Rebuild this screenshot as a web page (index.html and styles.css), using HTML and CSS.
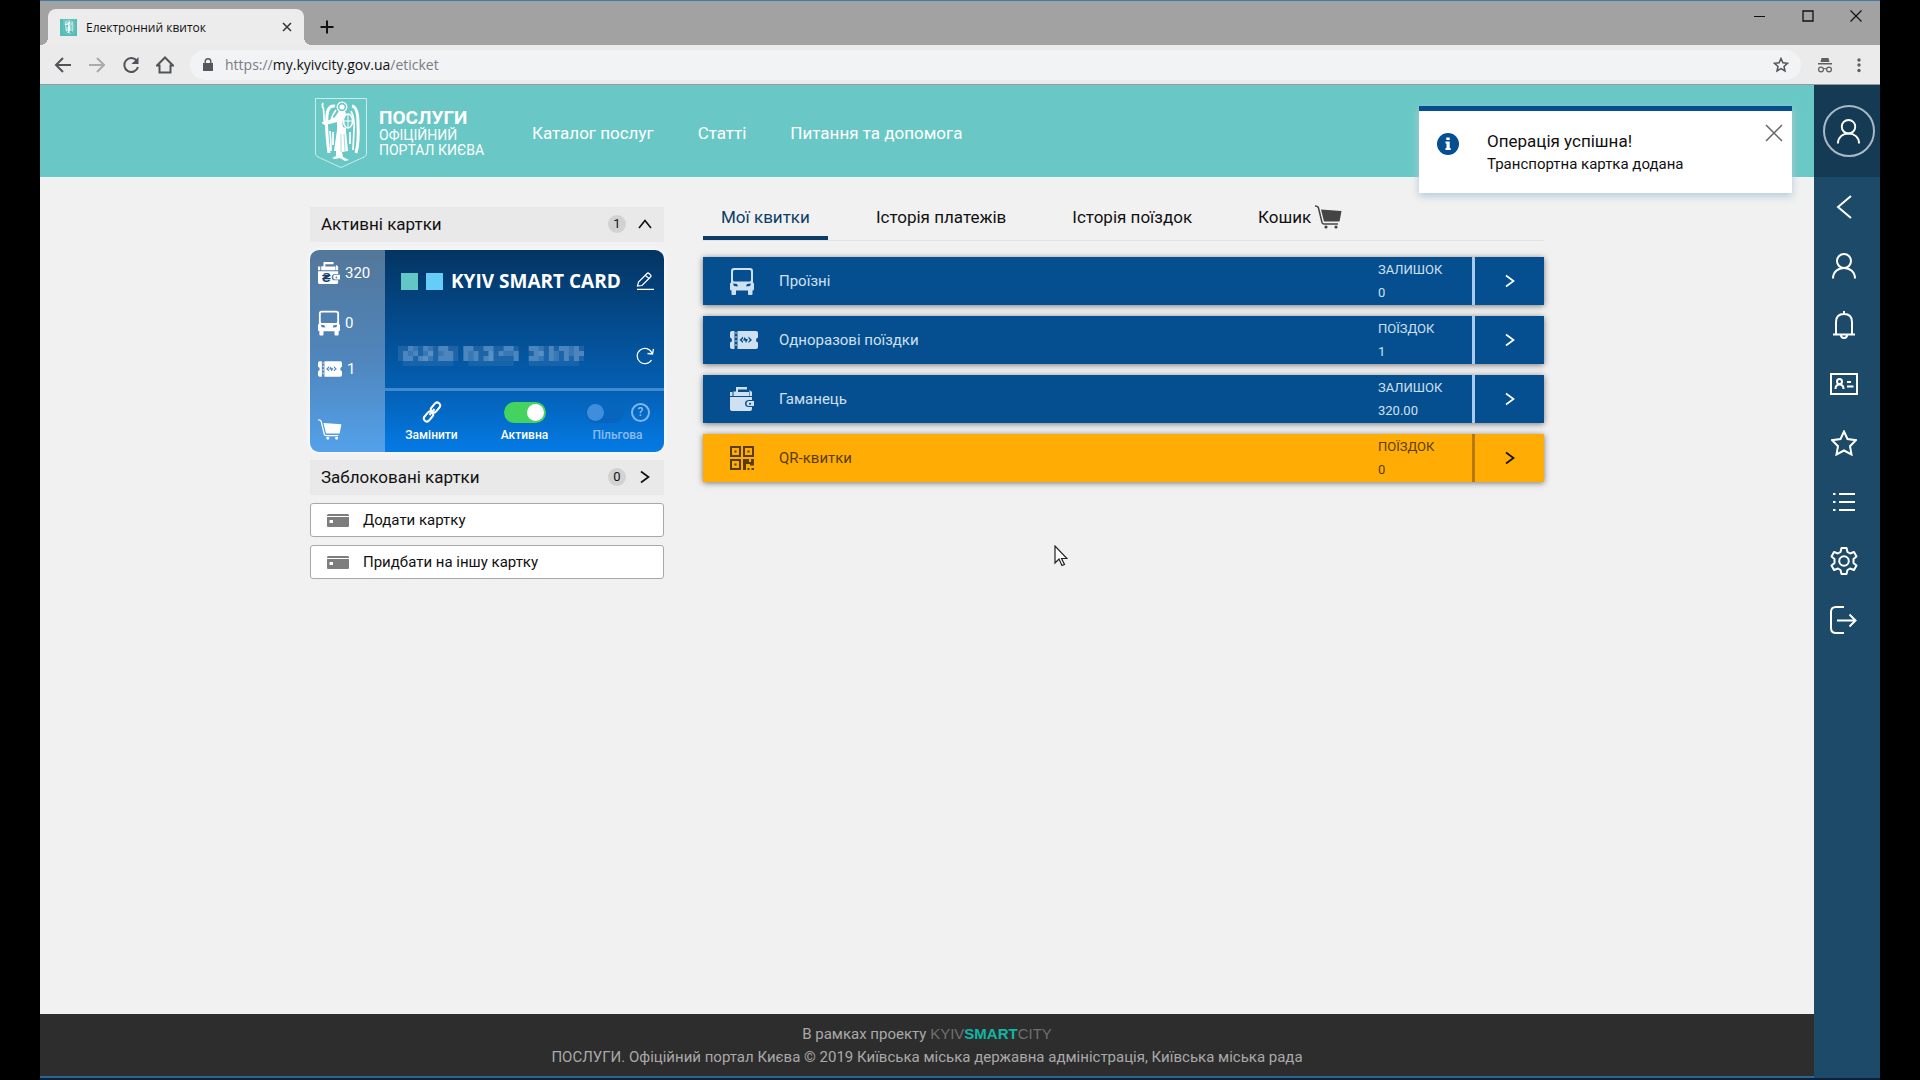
FILE: index.html
```html
<!DOCTYPE html>
<html lang="uk">
<head>
<meta charset="utf-8">
<meta name="viewport" content="width=device-width, initial-scale=1">
<title>Електронний квиток</title>
<link rel="stylesheet" href="styles.css">
</head>
<body>
<svg class="sprite" aria-hidden="true">
  <symbol id="bus" viewBox="0 0 24 27"><path fill-rule="evenodd" d="M4 0h16q3 0 3 3v11.500l1 1V21q0 1.500-1.500 1.500V26q0 1-1 1H19q-1 0-1-1v-3.500H6V26q0 1-1 1H2.500q-1 0-1-1v-3.500Q0 22.500 0 21v-5.500l1-1V3q0-3 3-3zM4.500 2Q3 2 3 3.500V12q0 1.500 1.500 1.500h15q1.500 0 1.500-1.500V3.500Q21 2 19.500 2zM3 15.500l1 2.500 4 .5-1-2.500zM21 15.500l-1 2.500-4 .5 1-2.500z"/></symbol>
  <symbol id="ticket" viewBox="0 0 28 18"><path fill-rule="evenodd" d="M2 0h2.500v18H2q-2 0-2-2v-4.500q2-.5 2-2.500T0 6.500V2q0-2 2-2zM5.500 1h1v2h-1zm0 4h1v2h-1zm0 4h1v2h-1zm0 4h1v2h-1zM7.500 0H26q2 0 2 2v4.500Q26 7 26 9t2 2.500V16q0 2-2 2H7.500zM13 5.500L9.500 9l3.500 3v-1.700L11.600 9 13 7.500zM14.500 6l-1.500 3.500h2l1 2.500 2-4h-2zM18.500 12L22 9l-3.500-3.500v1.700L20 9l-1.500 1.300z"/></symbol>
  <symbol id="wallet" viewBox="0 0 24 24"><path fill-rule="evenodd" d="M0 5h2.500v4H0zM3.500 9V4.500H6V0h11v2.500H8V9zm4.500-4h11v4H8zm11.500-2v6H22V5zM0 10h22v3h-3q-4 0-4 3.500t4 3.500h3v2q0 2-2 2H2q-2 0-2-2zM19 14h5v5h-5q-2.500 0-2.500-2.500T19 14zm1 1.700a1 1 0 1 0 .1 0z"/></symbol>
  <symbol id="cart" viewBox="0 0 27 24"><path d="M0 1q3 0 3.500 2L7 17.500Q7.500 19 9 19h14" fill="none" stroke="currentColor" stroke-width="1.500"/><path d="M6 4.500L26.500 6l-2 10.500H9z"/><circle cx="11" cy="22" r="1.600"/><circle cx="21" cy="22" r="1.600"/></symbol>
  <symbol id="qr" viewBox="0 0 24 24"><path fill-rule="evenodd" d="M0 0h11v11H0zM2 2v7h7V2zM4.500 4.500h2v2h-2zM13 0h11v11H13zM15 2v7h7V2zM17.500 4.500h2v2h-2zM0 13h11v11H0zM2 15v7h7v-7zM4.500 17.500h2v2h-2zM13 13h6v3h2v-3h3v6.500h-4V18h-4v6h-3zM17.500 22h2v2h-2zM21.500 22H24v2h-2.500z"/></symbol>
  <symbol id="right" viewBox="0 0 10 14"><path d="M1 1.500L8.500 7 1 12.500" fill="none" stroke="currentColor" stroke-width="1.700"/></symbol>
  <symbol id="person" viewBox="0 0 26 26"><g fill="none" stroke="currentColor" stroke-width="2"><circle cx="13" cy="8" r="7"/><path d="M2 25.500C2 19 7 15 13 15s11 4 11 10.500"/></g></symbol>
  <symbol id="bank-card" viewBox="0 0 22 13"><path fill-rule="evenodd" d="M1 0h20l1 1v1H0V1zM0 3h22v9q0 1-1 1H1q-1 0-1-1zM2.500 6v3H6V6z"/></symbol>
  <symbol id="angel" viewBox="0 0 52 70">
    <path d="M.5.500h51V56Q51 58 49 59L26 69.500 3 59Q1 58 .5 56z" fill="none" stroke="currentColor" stroke-opacity=".65"/>
    <g fill="none" stroke="currentColor">
      <circle cx="27" cy="9" r="4.800" stroke-width="1.300"/>
      <path d="M8 5q-1.500 3 .5 5.500L9.500 27M7 25l8-2" stroke-width="1.700"/>
      <path d="M20 8q-7-1-8 9t0 20q1 11 2 18M37 8q6 1 6 18 1 18-2 29" stroke-width="3"/>
      <path d="M21 12q-4 5-5 11m-1 10q1 10 1 20M36 13q4 8 3 19l-1 20M18 34v13M35 34v12" stroke-width="1.700"/>
      <ellipse cx="33" cy="23" rx="4.500" ry="7" stroke-width="1.500"/><path d="M33 17v12m-4-6h8"/>
    </g>
    <g fill="currentColor"><circle cx="27" cy="9" r="2.600"/><path d="M24 13h6l1 3q-5 6-3 13l3 1v3l2 20-6 1 1 5 6 3-4 1-5-3-5 1-3-1 4-2v-5h-2l3-21v-8q-6 2-13 3v-2l11-6z"/></g>
    <path d="M26 36v18m3-18l1 17" stroke="#69c8c5" stroke-width=".6"/>
  </symbol>
</svg>

<div class="window">
  <div class="tabstrip">
    <div class="browser-tab">
      <span class="favicon"><svg width="12" height="16"><use href="#angel"/></svg></span>
      <span class="browser-tab-title">Електронний квиток</span>
      <button class="bare" aria-label="Закрити вкладку"><svg width="10" height="10" viewBox="0 0 10 10"><path d="M1 1l8 8M9 1L1 9" stroke="#333" stroke-width="1.500"/></svg></button>
    </div>
    <button class="bare new-tab" aria-label="Нова вкладка"><svg width="14" height="14" viewBox="0 0 14 14"><path d="M7 .5v13M.5 7h13" stroke="#111" stroke-width="2"/></svg></button>
    <div class="window-controls">
      <button class="bare" aria-label="Згорнути"><svg width="12" height="12" viewBox="0 0 12 12"><path d="M0 6.500h11" stroke="#111"/></svg></button>
      <button class="bare" aria-label="Розгорнути"><svg width="12" height="12" viewBox="0 0 12 12"><path d="M1 1h10v10H1z" stroke="#111" fill="none" stroke-width="1.300"/></svg></button>
      <button class="bare" aria-label="Закрити"><svg width="12" height="12" viewBox="0 0 12 12"><path d="M.5.500l11 11m0-11l-11 11" stroke="#111" stroke-width="1.200"/></svg></button>
    </div>
  </div>
  <div class="toolbar">
    <div class="nav-buttons">
      <button class="bare" aria-label="Назад"><svg width="18" height="18" viewBox="0 0 18 18"><path d="M9 2L2 9l7 7M2 9h15" fill="none" stroke="#505458" stroke-width="2"/></svg></button>
      <button class="bare" aria-label="Вперед"><svg width="18" height="18" viewBox="0 0 18 18"><path d="M9 2l7 7-7 7M16 9H1" fill="none" stroke="#aaa" stroke-width="2"/></svg></button>
      <button class="bare" aria-label="Оновити"><svg width="18" height="18" viewBox="0 0 18 18"><path d="M15 5A7 7 0 1 0 16 11" fill="none" stroke="#505458" stroke-width="2"/><path d="M16.500 1v7h-7z" fill="#505458"/></svg></button>
      <button class="bare" aria-label="Додому"><svg width="18" height="18" viewBox="0 0 18 18"><path d="M1 9.500L9 1.500l8 8h-2.500V16.500h-11V9.500z" fill="none" stroke="#505458" stroke-width="2"/></svg></button>
    </div>
    <div class="address">
      <svg width="10" height="13" viewBox="0 0 10 13"><path d="M0 5h10v8H0z" fill="#55595e"/><path d="M2.200 5V3.500a2.800 2.800 0 0 1 5.600 0V5" fill="none" stroke="#55595e" stroke-width="1.400"/></svg>
      <span class="url">https://<b>my.kyivcity.gov.ua</b>/eticket</span>
      <button class="bare" aria-label="Додати закладку"><svg width="16" height="16" viewBox="0 0 16 16"><path d="M8 1.500l1.900 4.300 4.600.5-3.500 3.100 1 4.600-4-2.400L4 14l1-4.600L1.500 6.300l4.600-.5z" fill="none" stroke="#505458" stroke-width="1.500"/></svg></button>
    </div>
    <div class="toolbar-end">
      <svg width="16" height="16" viewBox="0 0 16 16"><path d="M4.500 1h7l1 4h-9zM1 6h14v1.500H1z" fill="#5c6064"/><g fill="none" stroke="#5c6064" stroke-width="1.200"><circle cx="4" cy="12.500" r="2.400"/><circle cx="12" cy="12.500" r="2.400"/><path d="M6.500 12q1.500-1 3 0"/></g></svg>
      <button class="bare" aria-label="Меню"><svg width="4" height="16" viewBox="0 0 4 16" fill="#5c6064"><circle cx="2" cy="3" r="1.700"/><circle cx="2" cy="8" r="1.700"/><circle cx="2" cy="13.500" r="1.700"/></svg></button>
    </div>
  </div>

  <div class="page">
    <div class="site">
      <header class="site-header">
        <div class="container header-row">
          <a class="logo" href="#">
            <svg width="52" height="70"><use href="#angel"/></svg>
            <span class="logo-text"><strong>ПОСЛУГИ</strong><span>ОФІЦІЙНИЙ</span><span>ПОРТАЛ КИЄВА</span></span>
          </a>
          <nav class="main-nav"><a href="#">Каталог послуг</a><a href="#">Статті</a><a href="#">Питання та допомога</a></nav>
        </div>
      </header>

      <main class="container content">
        <aside class="cards">
          <button class="group-head"><span>Активні картки</span><span class="count">1</span><svg width="14" height="14" viewBox="0 0 14 14"><path d="M1 11l6-7.500 6 7.500" fill="none" stroke="#111" stroke-width="1.600"/></svg></button>
          <section class="smart-card">
            <ul class="balances">
              <li class="balance"><span class="purse"><svg width="22" height="24"><use href="#wallet"/></svg><i>₴</i></span>320</li>
              <li class="balance"><svg width="22" height="26"><use href="#bus"/></svg>0</li>
              <li class="balance"><svg width="24" height="16"><use href="#ticket"/></svg>1</li>
              <li class="balance"><svg width="24" height="21"><use href="#cart"/></svg></li>
            </ul>
            <div class="card-main">
              <div class="card-title">
                <span class="swatch teal"></span><span class="swatch sky"></span>
                <h2>KYIV SMART CARD</h2>
                <button class="bare" aria-label="Редагувати"><svg width="18" height="18" viewBox="0 0 18 18" fill="none" stroke="#fff" stroke-width="1.200"><path d="M1 17.400h17M1.500 14l1-4L11 1.500q1-1 2 0L14.500 3q1 1 0 2L6 13.500zM9.500 3.500L13 6.500"/></svg></button>
              </div>
              <div class="card-number">
                <svg width="186" height="20" viewBox="0 0 37 4" preserveAspectRatio="none" role="img" aria-label="Номер картки приховано">
                  <g fill="#7ba7d2"><path opacity=".2" d="M0 0h12v3H0zM13 0h11v3H13zM26 0h11v3H26z"/><path opacity=".15" d="M1 3h10v1H1zM14 3h9v1H14zM26 3h10v1H26z"/><path opacity=".5" d="M2 0h1v1H2zM5 0h1v1H5zM8 0h2v1H8zM1 1h1v1H1zM3 1h1v1H3zM6 1h1v1H6zM9 1h2v1H9zM1 2h2v1H1zM4 2h2v1H4zM8 2h3v1H8zM13 0h2v1H13zM17 0h2v1H17zM21 0h2v1H21zM13 1h1v2H13zM15 1h1v2H15zM18 1h1v1H18zM20 1h1v1H20zM23 1h1v2H23zM17 2h2v1H17zM26 0h2v1H26zM30 0h1v1H30zM32 0h2v1H32zM35 0h1v1H35zM27 1h2v1H27zM30 1h1v1H30zM33 1h1v2H33zM35 1h2v1H35zM26 2h2v1H26zM30 2h1v1H30zM35 2h1v1H35z"/><path opacity=".3" d="M3 0h1v1H3zM6 0h1v3H6zM2 1h1v1H2zM5 1h1v2H5zM8 1h1v1H8zM14 1h1v2H14zM18 1h1v2H18zM21 1h2v1H21zM28 0h1v2H28zM28 2h1v1H28zM31 1h1v2H31zM34 0h1v2H34z"/></g>
                </svg>
                <button class="bare" aria-label="Оновити"><svg width="18" height="18" viewBox="0 0 18 18" fill="none" stroke="#fff" stroke-width="1.300"><path d="M15.500 13A7.700 7.700 0 1 1 16 6M11.500 6.500l5 .5L17.500 2"/></svg></button>
              </div>
            </div>
            <div class="card-actions">
              <button class="bare action"><span class="action-icon"><svg width="20" height="22" viewBox="0 0 20 22" fill="none" stroke="#fff" stroke-width="2"><rect x="10.500" y="1" width="6" height="11" rx="3" transform="rotate(40 13.500 6.500)"/><rect x="3.500" y="10" width="6" height="11" rx="3" transform="rotate(40 6.500 15.500)"/><path d="M7.500 14L12.500 8"/></svg></span>Замінити</button>
              <label class="action"><span class="action-icon"><input class="toggle" type="checkbox" checked></span>Активна</label>
              <label class="action muted"><span class="action-icon"><input class="toggle" type="checkbox" disabled><span class="help">?</span></span>Пільгова</label>
            </div>
          </section>
          <button class="group-head"><span>Заблоковані картки</span><span class="count">0</span><svg width="14" height="14"><use href="#right"/></svg></button>
          <button class="card-button"><svg width="22" height="13"><use href="#bank-card"/></svg>Додати картку</button>
          <button class="card-button"><svg width="22" height="13"><use href="#bank-card"/></svg>Придбати на іншу картку</button>
        </aside>

        <section class="tickets">
          <nav class="tabs">
            <a class="tab active" href="#">Мої квитки</a>
            <a class="tab" href="#">Історія платежів</a>
            <a class="tab" href="#">Історія поїздок</a>
            <a class="tab" href="#">Кошик<svg width="27" height="24"><use href="#cart"/></svg></a>
          </nav>
          <ul class="rows">
            <li class="row"><span class="row-icon"><svg width="24" height="27"><use href="#bus"/></svg></span><span class="row-name">Проїзні</span><span class="row-value"><span>ЗАЛИШОК</span><span>0</span></span><button class="row-open" aria-label="Проїзні"><svg width="10" height="14"><use href="#right"/></svg></button></li>
            <li class="row"><span class="row-icon"><svg width="28" height="18"><use href="#ticket"/></svg></span><span class="row-name">Одноразові поїздки</span><span class="row-value"><span>ПОЇЗДОК</span><span>1</span></span><button class="row-open" aria-label="Одноразові поїздки"><svg width="10" height="14"><use href="#right"/></svg></button></li>
            <li class="row"><span class="row-icon"><svg width="24" height="24"><use href="#wallet"/></svg></span><span class="row-name">Гаманець</span><span class="row-value"><span>ЗАЛИШОК</span><span>320.00</span></span><button class="row-open" aria-label="Гаманець"><svg width="10" height="14"><use href="#right"/></svg></button></li>
            <li class="row qr"><span class="row-icon"><svg width="24" height="24"><use href="#qr"/></svg></span><span class="row-name">QR-квитки</span><span class="row-value"><span>ПОЇЗДОК</span><span>0</span></span><button class="row-open" aria-label="QR-квитки"><svg width="10" height="14"><use href="#right"/></svg></button></li>
          </ul>
        </section>
      </main>

      <footer class="site-footer">
        <p>В рамках проекту <span class="brand">KYIV<b>SMART</b>CITY</span></p>
        <p>ПОСЛУГИ. Офіційний портал Києва © 2019 Київська міська державна адміністрація, Київська міська рада</p>
      </footer>

      <div class="toast" role="status">
        <svg class="toast-icon" width="22" height="22" viewBox="0 0 22 22"><circle cx="11" cy="11" r="11" fill="#054f90"/><path d="M9.300 4.500h3.400v2.500H9.300zM8.500 8.500h4.200v6.500h1v2H8.500v-2h1v-4.500h-1z" fill="#fff"/></svg>
        <div class="toast-text"><strong>Операція успішна!</strong><span>Транспортна картка додана</span></div>
        <button class="bare" aria-label="Закрити повідомлення"><svg width="18" height="18" viewBox="0 0 18 18"><path d="M1 1l16 16M17 1L1 17" stroke="#666" stroke-width="1.500"/></svg></button>
      </div>
    </div>

    <nav class="side">
      <a class="profile" href="#" aria-label="Профіль"><span class="avatar"><svg width="25" height="25"><use href="#person"/></svg></span></a>
      <a class="side-link" href="#" aria-label="Згорнути"><svg width="16" height="24" viewBox="0 0 16 24"><path d="M15 1L2 12l13 11"/></svg></a>
      <a class="side-link" href="#" aria-label="Кабінет"><svg width="26" height="26"><use href="#person"/></svg></a>
      <a class="side-link" href="#" aria-label="Сповіщення"><svg width="22" height="28" viewBox="0 0 22 28"><path d="M0 23.500h22M3 23V11q0-8 8-8t8 8v12M11 3V0M8 24q0 3 3 3t3-3"/></svg></a>
      <a class="side-link" href="#" aria-label="Документи"><svg width="28" height="22" viewBox="0 0 28 22"><path d="M1 1h26v20H1z"/><circle cx="9.500" cy="8.500" r="2.500"/><path d="M5.500 16q0-4.500 4-4.500t4 4.500M17 9h4M17 13.500h6.500"/></svg></a>
      <a class="side-link" href="#" aria-label="Обране"><svg width="26" height="26" viewBox="0 0 26 26"><path d="M13 1.500l3.500 7.500 8.500 1.200-6 6 1.500 8.300L13 20.500 5.500 24.500 7 16.200 1 10.200 9.500 9z"/></svg></a>
      <a class="side-link" href="#" aria-label="Список"><svg width="22" height="20" viewBox="0 0 22 20"><path d="M6 2h16M6 10h16M6 18h16M0 2h2.500M0 10h2.500M0 18h2.500"/></svg></a>
      <a class="side-link" href="#" aria-label="Налаштування"><svg width="28" height="28" viewBox="0 0 28 28"><circle cx="14" cy="14" r="4.800"/><path d="M11.500 1h5l1 4 2.500 1.500 4-1.500 2.500 4.500-3 2.500v4l3 2.500-2.500 4.500-4-1.500-2.500 1.500-1 4h-5l-1-4L8 21.500 4 23l-2.500-4.500 3-2.500v-4l-3-2.500L4 5l4 1.500L10.500 5z" stroke-linejoin="round"/></svg></a>
      <a class="side-link" href="#" aria-label="Вийти"><svg width="27" height="28" viewBox="0 0 27 28"><path d="M14 1H6Q1 1 1 6v16q0 5 5 5h8M7 14.500h18M19.500 8.500l6 6-6 6"/></svg></a>
    </nav>
  </div>
  <svg class="cursor" width="14" height="22" viewBox="0 0 14 22"><path d="M1 1v17l4-4 3 6.500 2.500-1-3-6H13z" fill="#fff" stroke="#222" stroke-width="1.200"/></svg>
</div>
</body>
</html>
```
FILE: styles.css
```css
* { box-sizing: border-box; }
body { margin: 0; background: #000; color: #111; font-family: Roboto, "Liberation Sans", sans-serif; font-size: 16px; }
a { color: inherit; text-decoration: none; }
ul { list-style: none; margin: 0; padding: 0; }
h2, p { margin: 0; }
button { font: inherit; color: inherit; cursor: pointer; }
svg { display: block; flex: none; }
svg:not([fill]) { fill: currentColor; }
.sprite { position: absolute; width: 0; height: 0; }
.bare { display: flex; align-items: center; justify-content: center; padding: 0; border: 0; background: none; }

.window { position: relative; display: flex; flex-direction: column; min-height: 100vh; margin: 0 40px; border-top: 1px solid #3c7dac; border-bottom: 2px solid #0c2238; background: #f1f1f1; }

/* browser frame */
.tabstrip { display: flex; align-items: flex-end; height: 44px; padding-left: 8px; background: #a2a2a2; font-family: "Open Sans", "Noto Sans", sans-serif; }
.browser-tab { position: relative; display: flex; align-items: center; gap: 9px; width: 256px; height: 36px; padding: 8px 12px; border-radius: 8px 8px 0 0; background: #ececec; font-size: 12px; }
.browser-tab::before, .browser-tab::after { content: ""; position: absolute; bottom: 0; width: 8px; height: 8px; }
.browser-tab::before { left: -8px; background: radial-gradient(circle at 0 0, transparent 8px, #ececec 8px); }
.browser-tab::after { right: -8px; background: radial-gradient(circle at 100% 0, transparent 8px, #ececec 8px); }
.favicon { display: flex; align-items: center; justify-content: center; width: 17px; height: 17px; background: #55bdb6; color: #fff; }
.browser-tab-title { flex: 1; }
.new-tab { width: 46px; height: 36px; }
.window-controls { display: flex; align-self: flex-start; margin-left: auto; }
.window-controls .bare { width: 48px; height: 30px; }
.toolbar { display: flex; align-items: center; height: 40px; padding-left: 6px; border-bottom: 1px solid #999; background: #ebebeb; font-family: "Open Sans", "Noto Sans", sans-serif; }
.nav-buttons { display: flex; }
.nav-buttons .bare { width: 34px; }
.address { display: flex; align-items: center; flex: 1; gap: 12px; height: 30px; margin-left: 8px; padding: 0 12px 0 13px; border-radius: 15px; background: #f1f3f5; }
.url { flex: 1; color: #7a7d82; font-size: 14px; }
.url b { color: #111; font-weight: 400; }
.toolbar-end { display: flex; align-items: center; gap: 24px; padding: 0 19px 0 16px; }

/* site */
.page { display: flex; flex: 1; }
.site { position: relative; display: flex; flex: 1; flex-direction: column; min-width: 0; }
.container { width: 100%; max-width: 1234px; margin: 0 auto; }
.site-header { background: #69c8c5; color: #fff; }
.header-row { display: flex; align-items: center; height: 92px; padding: 4px 5px 0; }
.logo { display: flex; align-items: center; gap: 12px; }
.logo-text { display: flex; flex-direction: column; width: 108px; font-size: 14px; line-height: 15px; white-space: nowrap; }
.logo-text strong { font-size: 19px; line-height: 20px; }
.main-nav { display: flex; gap: 44px; margin-left: 45px; font-size: 17px; }
.content { display: flex; flex: 1; align-items: flex-start; gap: 39px; padding-top: 30px; padding-bottom: 30px; }

.cards { display: flex; flex: none; flex-direction: column; gap: 8px; width: 354px; }
.group-head { display: flex; align-items: center; gap: 12px; height: 35px; padding: 0 12px 2px 11px; border: 0; background: #e9e9e9; font-size: 17px; }
.group-head span:first-child { flex: 1; text-align: left; }
.count { width: 18px; border-radius: 9px; background: #d2d2d2; font-size: 13px; line-height: 18px; text-align: center; }
.smart-card { display: grid; grid-template-columns: 75px 1fr; grid-template-rows: 1fr 64px; height: 202px; border-radius: 9px; overflow: hidden; box-shadow: 0 0 5px #fff; color: #fff; }
.balances { display: flex; flex-direction: column; gap: 25px; grid-row: span 2; padding: 11px 8px 12px; background: linear-gradient(#53779a, #4f86bd 55%, #53a1ea); font-size: 15px; line-height: 16px; }
.balance { display: flex; align-items: center; gap: 5px; }
.balance:last-child { margin-top: auto; }
.purse { position: relative; }
.purse i { position: absolute; left: 4px; bottom: 0; color: #14406e; font-size: 13px; font-style: normal; font-weight: 700; line-height: 14px; }
.card-main { display: flex; flex-direction: column; justify-content: space-between; padding: 18px 10px 22px 13px; background: linear-gradient(#043462, #045fb2); }
.card-title { display: flex; align-items: center; gap: 8px; padding-left: 3px; }
.card-title h2 { flex: 1; font-family: "Open Sans", "Noto Sans", sans-serif; font-size: 19px; line-height: 26px; white-space: nowrap; }
.swatch { width: 17px; height: 17px; }
.teal { background: #62c7c5; }
.sky { background: #64cdf8; }
.card-number { display: flex; align-items: center; justify-content: space-between; }
.card-actions { display: grid; grid-template-columns: repeat(3, 1fr); border-top: 3px solid #408ad2; background: linear-gradient(#0460b5, #047be5); font-size: 12px; font-weight: 500; }
.action { display: flex; flex-direction: column; align-items: center; justify-content: flex-start; gap: 4px; padding-top: 10px; line-height: 16px; }
.action-icon { display: flex; align-items: center; gap: 7px; height: 22px; }
.muted { color: #8bbcf0; }
.toggle { appearance: none; width: 42px; height: 21px; margin: 0; padding: 2px; border-radius: 11px; background: #45d360; }
.toggle::before { content: ""; display: block; width: 17px; height: 17px; margin-left: 21px; border-radius: 50%; background: #fff; }
.toggle:disabled { width: 39px; background: #0765be; }
.toggle:disabled::before { margin-left: 0; background: #408ddd; }
.help { width: 19px; height: 19px; border: 2px solid #7fb6ee; border-radius: 50%; line-height: 15px; text-align: center; }
.card-button { display: flex; align-items: center; gap: 14px; height: 34px; padding: 0 16px; border: 1px solid #a8a8a8; border-radius: 3px; background: #fff; font-size: 15px; }
.card-button svg { color: #7d7d7d; }

.tickets { flex: 1; min-width: 0; }
.tabs { display: flex; gap: 30px; border-bottom: 1px solid #e2e2e2; }
.tab { display: flex; align-items: center; gap: 4px; height: 33px; padding: 0 18px 14px; font-size: 17px; white-space: nowrap; }
.tab svg { color: #444; }
.tab.active { border-bottom: 4px solid #0b3d68; padding-bottom: 10px; color: #0b3d68; }
.rows { display: flex; flex-direction: column; gap: 11px; margin-top: 16px; }
.row { display: flex; align-items: center; height: 48px; padding-left: 27px; background: #054f90; box-shadow: 0 1px 6px #777; color: #cfe0f0; font-size: 15px; }
.row-icon { width: 49px; }
.row-name { flex: 1; }
.row-value { display: flex; flex-direction: column; width: 94px; font-size: 13px; line-height: 23px; }
.row-open { display: flex; align-items: center; justify-content: center; align-self: stretch; width: 72px; border: 0; border-left: 3px solid #a6cbee; background: none; color: #fff; }
.qr { background: #ffad05; color: #5a3c05; }
.qr .row-open { border-color: #b87a00; color: #111; }

.site-footer { padding: 8px 0 7px; border-bottom: 2px solid #2c6694; background: #2d2d2d; color: #a9a9a9; font-size: 15px; line-height: 23px; text-align: center; }
.brand { color: #707070; font-family: "Liberation Sans", Arial, sans-serif; }
.brand b { color: #0fb5a5; }

.toast { position: absolute; top: 21px; right: 22px; display: flex; align-items: flex-start; width: 373px; padding: 13px 9px 17px 18px; border-top: 5px solid #054f90; background: #fff; box-shadow: 0 3px 8px #b3c8da; }
.toast-icon { margin-top: 9px; margin-right: 28px; }
.toast-text { display: flex; flex: 1; flex-direction: column; padding-top: 6px; font-size: 15px; line-height: 23px; }
.toast-text strong { font-size: 17px; font-weight: 400; }

/* right rail */
.side { display: flex; flex: none; flex-direction: column; width: 66px; background: #1c4a68; color: #fff; }
.profile { display: flex; align-items: center; justify-content: center; height: 92px; padding-left: 3px; background: #153a53; }
.avatar { display: flex; align-items: center; justify-content: center; width: 52px; height: 52px; border: 2px solid #a9b8c6; border-radius: 50%; }
.side-link { display: flex; align-items: center; justify-content: center; height: 59px; padding-right: 7px; }
.side-link svg { fill: none; stroke: currentColor; stroke-width: 2; }
.cursor { position: absolute; left: 1014px; top: 544px; }
```
